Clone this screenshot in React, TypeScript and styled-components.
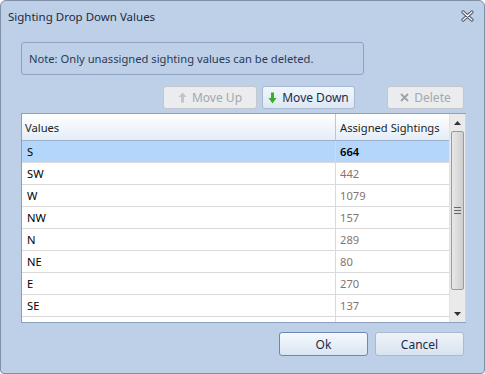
import React, { useState } from 'react';
import styled, { createGlobalStyle } from 'styled-components';

const GlobalStyle = createGlobalStyle`
	html, body {
		margin: 0;
		padding: 0;
		background: #ffffff;
	}
	body {
		font-family: 'Noto Sans', 'Open Sans', sans-serif;
		font-size: 11.2px;
	}
`;

interface Row {
	value: string;
	count: number;
}

const rows: Row[] = [
	{ value: 'S', count: 664 },
	{ value: 'SW', count: 442 },
	{ value: 'W', count: 1079 },
	{ value: 'NW', count: 157 },
	{ value: 'N', count: 289 },
	{ value: 'NE', count: 80 },
	{ value: 'E', count: 270 },
	{ value: 'SE', count: 137 },
];

const Window = styled.div`
	width: 485px;
	height: 374px;
	box-sizing: border-box;
	border: 1px solid #7f90a8;
	border-radius: 6px 6px 4px 4px;
	background: #bdd0e7;
	display: flex;
	flex-direction: column;
	overflow: hidden;
	color: #1e1e1e;
`;

const TitleBar = styled.div`
	height: 30px;
	display: flex;
	align-items: center;
	justify-content: space-between;
	padding: 0 10px 0 7px;
	font-size: 11.5px;
	color: #1f2a3c;
`;

const CloseBox = styled.div`
	width: 14px;
	height: 14px;
	display: flex;
	align-items: center;
	justify-content: center;
`;

const Body = styled.div`
	flex: 1;
	display: flex;
	flex-direction: column;
	padding: 11px 20px 0 20px;
`;

const Note = styled.div`
	width: 343px;
	height: 33px;
	box-sizing: border-box;
	border: 1px solid #8ea3c1;
	border-radius: 3px;
	display: flex;
	align-items: center;
	padding-left: 7px;
	color: #2b3a55;
`;

const Toolbar = styled.div`
	display: flex;
	margin-top: 11px;
	height: 23px;
	padding-left: 142px;
	gap: 5px;
`;

const ToolButton = styled.button<{ $disabled?: boolean; $width: number }>`
	width: ${(p) => p.$width}px;
	height: 23px;
	box-sizing: border-box;
	border: 1px solid ${(p) => (p.$disabled ? '#c4c8ce' : '#a9bad1')};
	border-radius: 3px;
	background: ${(p) =>
		p.$disabled ? '#eaecee' : 'linear-gradient(#f1f6fc, #dde8f5)'};
	color: ${(p) => (p.$disabled ? '#a4a8ae' : '#1e2b45')};
	font-family: inherit;
	font-size: 12px;
	display: flex;
	align-items: center;
	justify-content: center;
	gap: 5px;
	padding: 0;
`;

const Spacer = styled.div`
	flex: 1;
`;

const GridFrame = styled.div`
	margin-top: 4px;
	height: 210px;
	display: flex;
	border: 1px solid #8aa0be;
	border-right: none;
	background: #ffffff;
	box-sizing: border-box;
	width: 445px;
`;

const Grid = styled.div`
	flex: 1;
	overflow: hidden;
	display: flex;
	flex-direction: column;
`;

const HeaderRow = styled.div`
	height: 27px;
	flex: none;
	display: grid;
	grid-template-columns: 313px 1fr;
	background: linear-gradient(#ffffff, #e4edf8);
	border-bottom: 1px solid #9cb2cf;
	box-sizing: border-box;
`;

const HeaderCell = styled.div<{ $divider?: boolean }>`
	display: flex;
	align-items: center;
	padding-left: ${(p) => (p.$divider ? '4px' : '3px')};
	border-left: ${(p) => (p.$divider ? '1px solid #b7c8dd' : 'none')};
	color: #1e1e1e;
`;

const DataRow = styled.div<{ $selected?: boolean }>`
	height: 22px;
	flex: none;
	display: grid;
	grid-template-columns: 313px 1fr;
	background: ${(p) => (p.$selected ? '#b5d6fb' : '#ffffff')};
	border-bottom: 1px solid #dadada;
	box-sizing: border-box;
`;

const Cell = styled.div<{ $divider?: boolean; $selected?: boolean }>`
	display: flex;
	align-items: center;
	padding-left: ${(p) => (p.$divider ? '4px' : '5px')};
	border-left: ${(p) => (p.$divider ? '1px solid #dadada' : 'none')};
	color: ${(p) => (p.$divider ? (p.$selected ? '#000000' : '#87736f') : '#000000')};
	font-weight: ${(p) => (p.$divider && p.$selected ? 600 : 400)};
`;

const ScrollBar = styled.div`
	width: 17px;
	flex: none;
	background: #eaeaea;
	display: flex;
	flex-direction: column;
	align-items: center;
	border-left: 1px solid #e2e2e2;
	border-right: 1px solid #d4d4d4;
	box-sizing: border-box;
`;

const Arrow = styled.div`
	height: 17px;
	width: 100%;
	display: flex;
	align-items: center;
	justify-content: center;
	flex: none;
`;

const Thumb = styled.div`
	width: 13px;
	height: 159px;
	box-sizing: border-box;
	border: 1px solid #9a9a9a;
	border-radius: 2px;
	background: linear-gradient(90deg, #e8e8e8, #d8d8d8 60%, #cfcfcf);
	display: flex;
	align-items: center;
	justify-content: center;
	flex: none;
`;

const Track = styled.div`
	flex: 1;
`;

const Footer = styled.div`
	display: flex;
	justify-content: flex-end;
	gap: 7px;
	margin-top: 9px;
`;

const DialogButton = styled.button<{ $primary?: boolean }>`
	width: 89px;
	height: 24px;
	box-sizing: border-box;
	border: 1px solid ${(p) => (p.$primary ? '#6f89ad' : '#a9bad1')};
	border-radius: 3px;
	background: ${(p) =>
		p.$primary ? 'linear-gradient(#f5f9fd, #d9e5f3)' : 'linear-gradient(#eef3f9, #d8e3f0)'};
	font-family: inherit;
	font-size: 12px;
	color: #1e2b45;
	padding: 0;
`;

const CloseIcon = () => (
	<svg width="13" height="12" viewBox="0 0 13 12">
		<path d="M2 2 L11 10 M11 2 L2 10" stroke="#4a5568" strokeWidth="3.2" strokeLinecap="round" />
		<path d="M2 2 L11 10 M11 2 L2 10" stroke="#ffffff" strokeWidth="1.2" strokeLinecap="round" />
	</svg>
);

const UpIcon = () => (
	<svg width="9" height="11" viewBox="0 0 9 11">
		<path d="M4.5 0.5 L8.5 5 L6 5 L6 10.5 L3 10.5 L3 5 L0.5 5 Z" fill="#c2c4c8" />
	</svg>
);

const DownIcon = () => (
	<svg width="9" height="12" viewBox="0 0 9 12">
		<path d="M3 0.5 L6 0.5 L6 6 L8.5 6 L4.5 11.5 L0.5 6 L3 6 Z" fill="#3cae2c" />
	</svg>
);

const DeleteIcon = () => (
	<svg width="9" height="9" viewBox="0 0 9 9">
		<path d="M1 1 L8 8 M8 1 L1 8" stroke="#9ea2a8" strokeWidth="1.8" />
	</svg>
);

const App = () => {
	const [selected, setSelected] = useState(0);

	return (
		<>
			<GlobalStyle />
			<Window>
				<TitleBar>
					<span>Sighting Drop Down Values</span>
					<CloseBox>
						<CloseIcon />
					</CloseBox>
				</TitleBar>
				<Body>
					<Note>Note: Only unassigned sighting values can be deleted.</Note>
					<Toolbar>
						<ToolButton $disabled $width={94}>
							<UpIcon />
							Move Up
						</ToolButton>
						<ToolButton $width={93}>
							<DownIcon />
							Move Down
						</ToolButton>
						<Spacer />
						<ToolButton $disabled $width={77}>
							<DeleteIcon />
							Delete
						</ToolButton>
					</Toolbar>
					<GridFrame>
						<Grid>
							<HeaderRow>
								<HeaderCell>Values</HeaderCell>
								<HeaderCell $divider>Assigned Sightings</HeaderCell>
							</HeaderRow>
							{rows.map((r, i) => (
								<DataRow key={r.value} $selected={i === selected} onClick={() => setSelected(i)}>
									<Cell>{r.value}</Cell>
									<Cell $divider $selected={i === selected}>
										{r.count}
									</Cell>
								</DataRow>
							))}
							{/* next row is scrolled out of view, only its top edge shows */}
							<DataRow>
								<Cell />
								<Cell $divider />
							</DataRow>
						</Grid>
						<ScrollBar>
							<Arrow>
								<svg width="7" height="4" viewBox="0 0 7 4">
									<path d="M0 4 L3.5 0 L7 4 Z" fill="#333" />
								</svg>
							</Arrow>
							<Thumb>
								<svg width="7" height="7" viewBox="0 0 7 7">
									<path d="M0 0.5 H7 M0 3.5 H7 M0 6.5 H7" stroke="#666" strokeWidth="1" />
								</svg>
							</Thumb>
							<Track />
							<Arrow>
								<svg width="7" height="4" viewBox="0 0 7 4">
									<path d="M0 0 L7 0 L3.5 4 Z" fill="#333" />
								</svg>
							</Arrow>
						</ScrollBar>
					</GridFrame>
					<Footer>
						<DialogButton $primary>Ok</DialogButton>
						<DialogButton>Cancel</DialogButton>
					</Footer>
				</Body>
			</Window>
		</>
	);
};

export default App;
